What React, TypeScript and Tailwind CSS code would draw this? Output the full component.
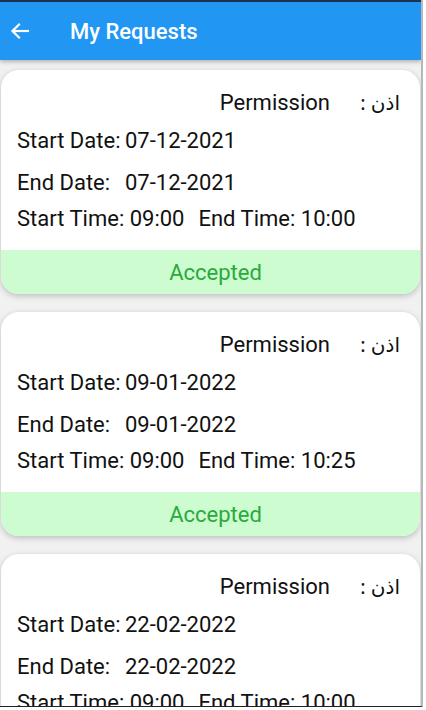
import React from "react";

type Req = { start: string; end: string; st: string; et: string };

const data: Req[] = [
  { start: "07-12-2021", end: "07-12-2021", st: "09:00", et: "10:00" },
  { start: "09-01-2022", end: "09-01-2022", st: "09:00", et: "10:25" },
  { start: "22-02-2022", end: "22-02-2022", st: "09:00", et: "10:00" },
];

function Card({ r }: { r: Req }) {
  return (
    <div className="mx-[1px] rounded-[18px] bg-white shadow-[0_2px_6px_rgba(0,0,0,0.22)] overflow-hidden shrink-0">
      <div className="pt-[20px] pb-[18px] pl-[16px] pr-[20px] text-[22px] leading-[26px] text-[#111]">
        <div className="flex justify-end items-center h-[26px]">
          <span>Permission</span>
          <span
            className="ml-[30px] w-[40px] text-right"
            style={{ fontFamily: '"Noto Sans", "DejaVu Sans", sans-serif', fontSize: 20 }}
            dir="rtl"
          >
            {"اذن :"}
          </span>
        </div>
        <div className="flex items-center h-[26px] mt-[12px]">
          <span className="w-[108px]">Start Date:</span>
          <span>{r.start}</span>
        </div>
        <div className="flex items-center h-[26px] mt-[16px]">
          <span className="w-[108px]">End Date:</span>
          <span>{r.end}</span>
        </div>
        <div className="flex items-center h-[26px] mt-[10px]">
          <span>Start Time: {r.st}</span>
          <span className="ml-[14px]">End Time: {r.et}</span>
        </div>
      </div>
      <div className="h-[44px] bg-[#ccfcd0] flex items-center justify-center pl-[10px] text-[22px] text-[#2aaa3a]">
        Accepted
      </div>
    </div>
  );
}

export default function App() {
  return (
    <div
      className="w-[426px] h-[710px] bg-white overflow-hidden"
      style={{ fontFamily: "Roboto, 'Liberation Sans', sans-serif" }}
    >
      <div className="w-[423px] h-[707px] border-r-[2px] border-r-[#b8b8b8] border-b-[1px] border-b-[#222] flex flex-col overflow-hidden bg-[#f1f1f1]">
        <div className="h-[2px] bg-[#1a3550] shrink-0" />
        <div className="h-[58px] bg-[#2196f3] flex items-center shrink-0 shadow-[0_2px_4px_rgba(0,0,0,0.25)] relative z-10">
          <svg width="24" height="24" viewBox="0 0 24 24" className="ml-[8px]" fill="none" stroke="white" strokeWidth="2.2" strokeLinecap="square">
            <path d="M20 12H5" />
            <path d="M11 5.5L4.5 12L11 18.5" />
          </svg>
          <span className="ml-[38px] text-white text-[22px] font-medium">My Requests</span>
        </div>
        <div className="flex flex-col gap-[18px] pt-[10px]">
          {data.map((r, i) => (
            <Card key={i} r={r} />
          ))}
        </div>
      </div>
    </div>
  );
}
